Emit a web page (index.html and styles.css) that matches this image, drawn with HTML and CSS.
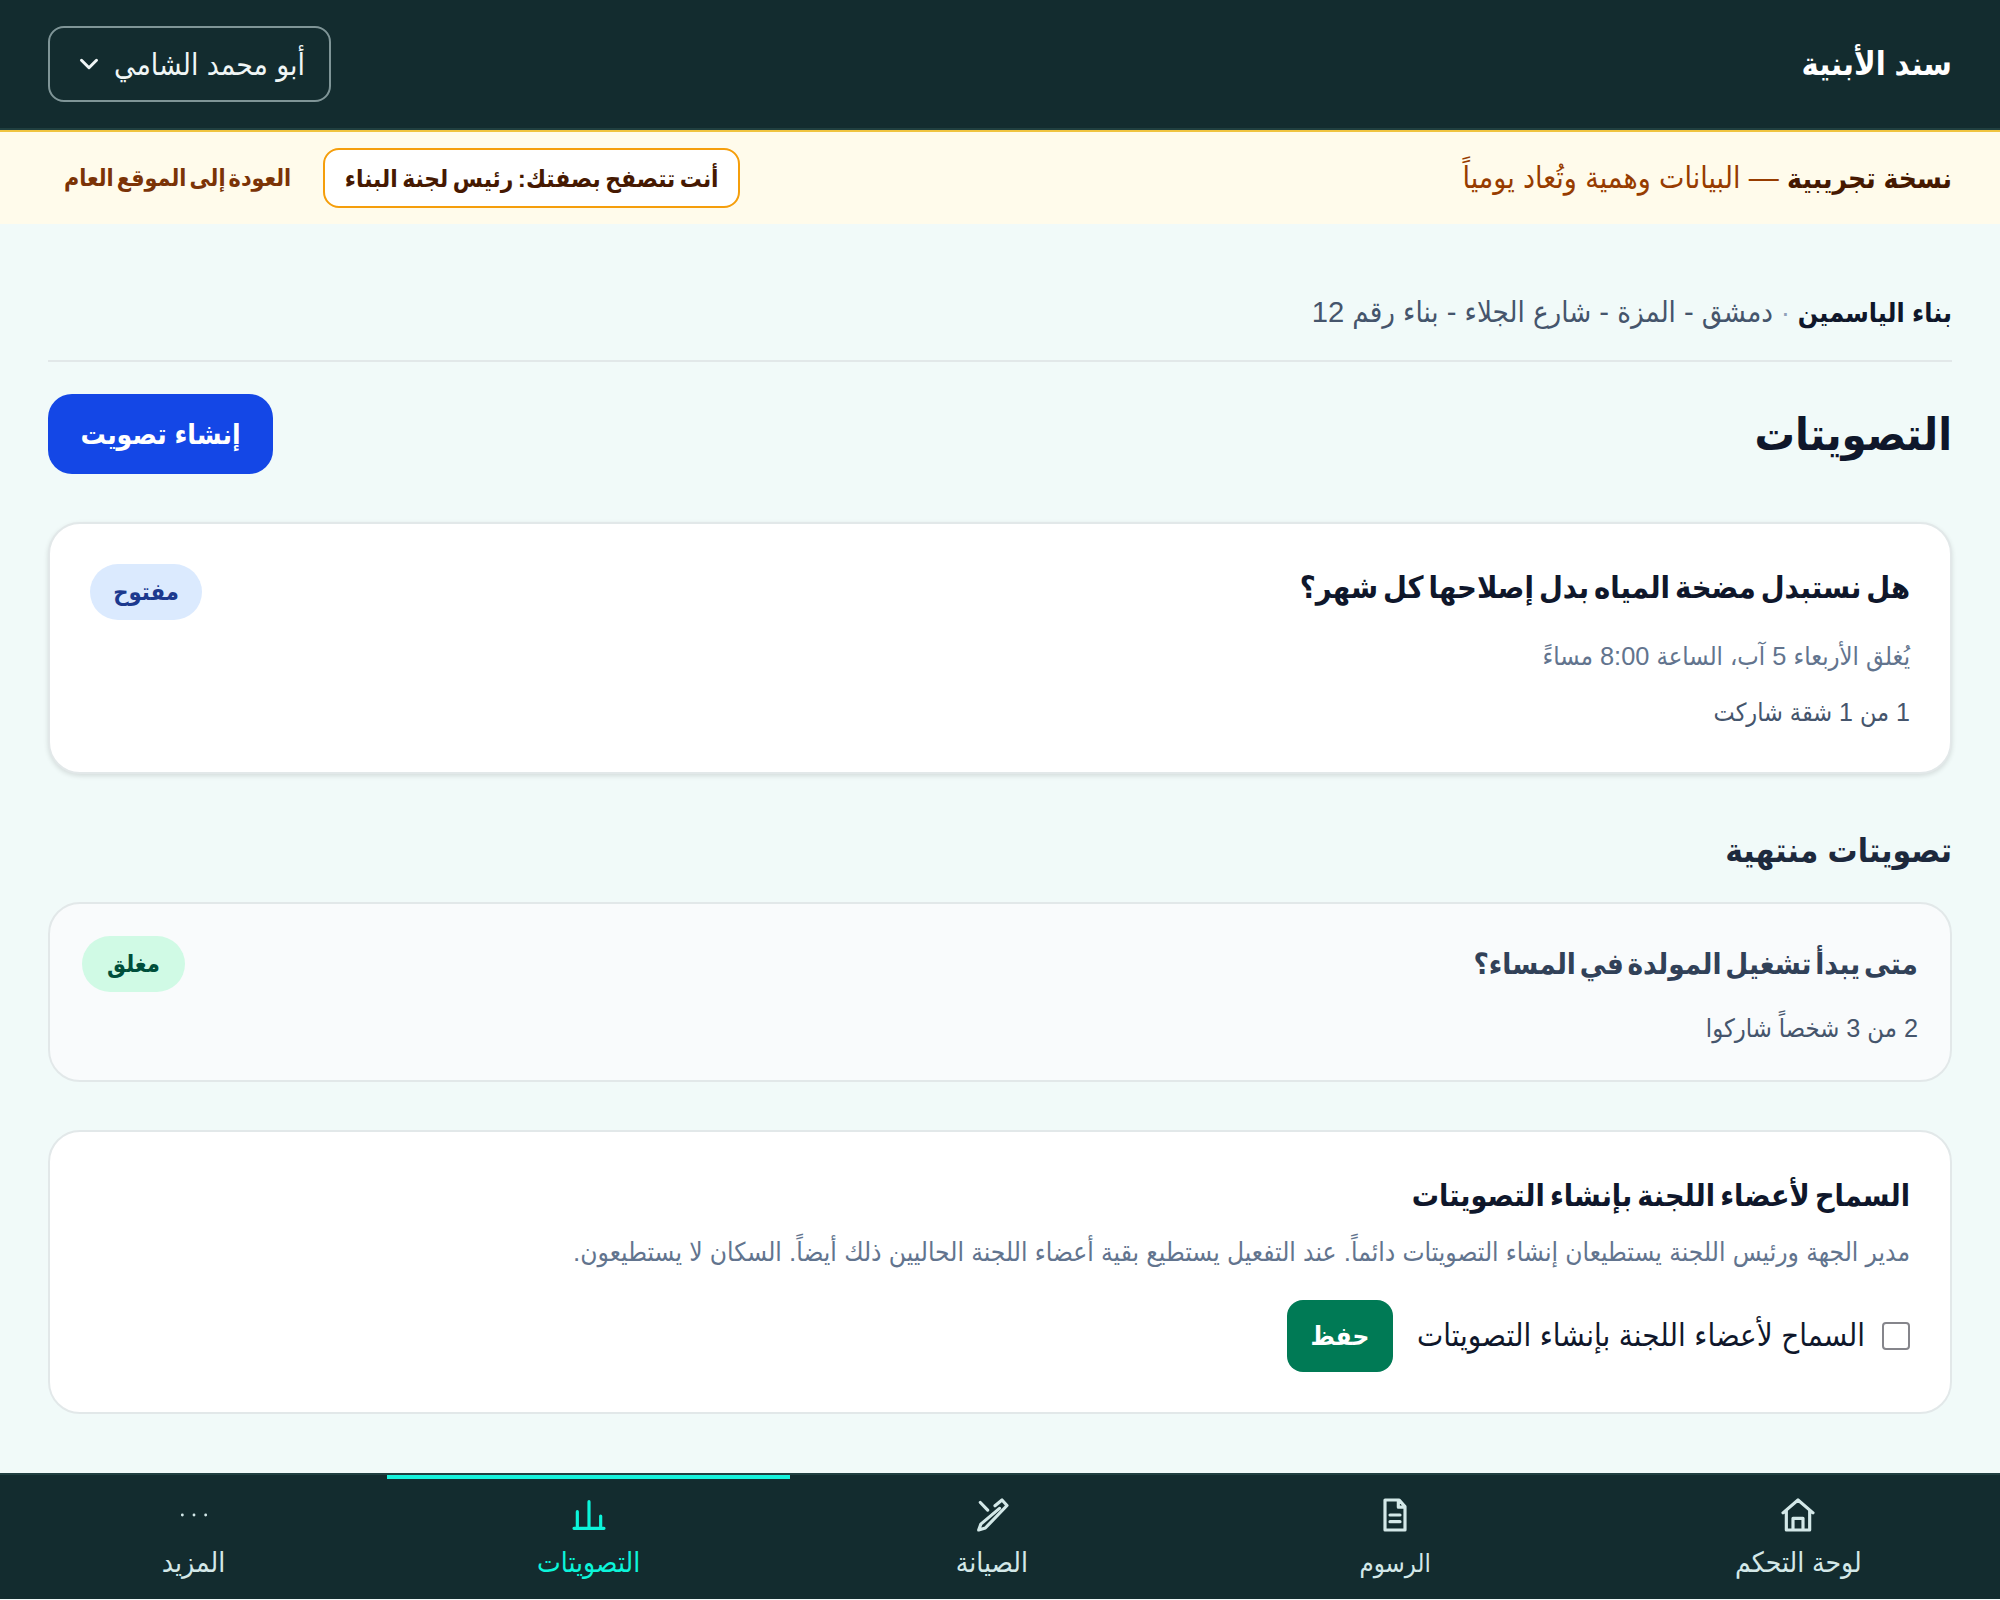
FILE: index.html
```html
<!DOCTYPE html>
<html lang="ar" dir="rtl">
<head>
<meta charset="utf-8">
<title>سند الأبنية</title>
<link rel="stylesheet" href="styles.css">
</head>
<body>
<header class="topbar">
  <span class="brand">سند الأبنية</span>
  <button class="user-menu"><span class="user-name">أبو محمد الشامي</span>
    <svg class="chevron" viewBox="0 0 24 24"><path d="m6 9 6 6 6-6"/></svg>
  </button>
</header>
<div class="demo-banner">
  <p class="demo-text"><strong>نسخة تجريبية</strong> <span>— البيانات وهمية وتُعاد يومياً</span></p>
  <div class="demo-actions">
    <span class="demo-role">أنت تتصفح بصفتك: رئيس لجنة البناء</span>
    <a class="demo-back">العودة إلى الموقع العام</a>
  </div>
</div>
<main class="content">
  <p class="building"><strong>بناء الياسمين</strong> <span class="dot">·</span> <span class="address">دمشق - المزة - شارع الجلاء - بناء رقم 12</span></p>
  <div class="page-head">
    <h1 class="page-title">التصويتات</h1>
    <button class="create">إنشاء تصويت</button>
  </div>
  <article class="card card-open">
    <div class="card-body">
      <h2 class="card-title">هل نستبدل مضخة المياه بدل إصلاحها كل شهر؟</h2>
      <p class="closes">يُغلق الأربعاء 5 آب، الساعة 8:00 مساءً</p>
      <p class="turnout">1 من 1 شقة شاركت</p>
    </div>
    <span class="badge badge-open">مفتوح</span>
  </article>
  <h2 class="section-title">تصويتات منتهية</h2>
  <article class="card card-closed">
    <div class="card-body">
      <h3 class="card-title">متى يبدأ تشغيل المولدة في المساء؟</h3>
      <p class="turnout">2 من 3 شخصاً شاركوا</p>
    </div>
    <span class="badge badge-closed">مغلق</span>
  </article>
  <section class="card settings">
    <h2 class="card-title">السماح لأعضاء اللجنة بإنشاء التصويتات</h2>
    <p class="hint">مدير الجهة ورئيس اللجنة يستطيعان إنشاء التصويتات دائماً. عند التفعيل يستطيع بقية أعضاء اللجنة الحاليين ذلك أيضاً. السكان لا يستطيعون.</p>
    <div class="setting-row">
      <label class="allow"><input class="check" type="checkbox"><span>السماح لأعضاء اللجنة بإنشاء التصويتات</span></label>
      <button class="save">حفظ</button>
    </div>
  </section>
</main>
<nav class="tabs">
  <a class="tab"><svg class="icon" viewBox="0 0 24 24"><path d="m3 10.7 9-7.7 9 7.7M5 9.5V21h14V9.5M9 21v-7h6v7"/></svg><span>لوحة التحكم</span></a>
  <a class="tab tab-fees"><svg class="icon" viewBox="0 0 24 24"><path d="M6 3h8.5L18 7v14H6zM14 3v4.3h4M9 12h6M9 16h6"/></svg><span>الرسوم</span></a>
  <a class="tab"><svg class="icon" viewBox="0 0 24 24"><path d="m5 4.5 4.4 4.6M13.8 6.5 18 3l3 3.3L8 19.8 4 21l1.3-3.5L16.5 8"/></svg><span>الصيانة</span></a>
  <a class="tab tab-active"><svg class="icon" viewBox="0 0 24 24"><path d="M3 20h18M5 20V10M12 20V4M19 20v-7.4"/></svg><span>التصويتات</span></a>
  <a class="tab tab-more"><svg class="icon" viewBox="0 0 24 24"><path d="M5 12h.01M12 12h.01M19 12h.01"/></svg><span>المزيد</span></a>
</nav>
</body>
</html>
```
FILE: styles.css
```css
* { box-sizing: border-box; }
body {
  margin: 0;
  min-height: 1600px;
  display: flex;
  flex-direction: column;
  background: #f1faf9;
  color: #0f172b;
  font-family: "Liberation Sans", "DejaVu Sans Condensed", "DejaVu Sans", sans-serif;
  font-size: 28px;
}
p, h1, h2, h3 { margin: 0; }
button { font: inherit; border: 0; margin: 0; padding: 0; }
svg { fill: none; stroke: currentColor; stroke-linecap: round; stroke-linejoin: round; }

.topbar {
  height: 130px;
  padding: 0 48px;
  display: flex;
  align-items: center;
  justify-content: space-between;
  background: #132c2f;
  border-bottom: 2px solid #203f40;
  color: #fff;
}
.brand { font-size: 32.4px; font-weight: 700; }
.user-menu {
  width: 283px;
  height: 76px;
  padding: 0 24px;
  display: flex;
  align-items: center;
  justify-content: space-between;
  background: transparent;
  border: 2px solid #7f9597;
  border-radius: 16px;
  color: #f0f6f6;
  font-size: 29.8px;
}
.chevron { width: 30px; height: 30px; stroke-width: 2.4; }

.demo-banner {
  height: 94px;
  padding: 0 48px;
  display: flex;
  align-items: center;
  justify-content: space-between;
  background: #fffbeb;
  border-top: 2px solid #f0c440;
}
.demo-text { line-height: 40px; font-size: 30px; color: #973c00; }
.demo-text strong { font-size: 28px; color: #461901; }
.demo-actions { display: flex; align-items: center; gap: 32px; font-weight: 700; }
.demo-role {
  width: 417px;
  height: 60px;
  display: flex;
  align-items: center;
  justify-content: center;
  background: #fff;
  border: 2px solid #f59e0b;
  border-radius: 16px;
  color: #461901;
  font-size: 24.3px;
  word-spacing: -2.3px;
}
.demo-back { padding-left: 16px; color: #7b3306; font-size: 23.1px; word-spacing: -3.3px; }

.content { padding: 68px 48px 59px; }
.building {
  height: 70px;
  border-bottom: 2px solid #e2e8e9;
  line-height: 40px;
  color: #45556c;
}
.building strong { font-size: 26.6px; color: #0f172b; }
.address { font-size: 29.2px; }
.dot { color: #90a1b9; }
.page-head { margin-top: 32px; display: flex; align-items: center; justify-content: space-between; }
.page-title { font-size: 44.8px; line-height: 80px; }
.create {
  width: 225px;
  height: 80px;
  border-radius: 24px;
  background: #1447e6;
  color: #fff;
  font-weight: 700;
}

.card { border: 2px solid #e2e8e9; border-radius: 32px; background: #fff; }
.card-open, .card-closed { display: flex; align-items: flex-start; justify-content: space-between; }
.card-open { margin-top: 48px; padding: 40px; box-shadow: 0 2px 5px rgba(0, 0, 0, 0.12); }
.card-title { font-size: 30.6px; line-height: 46px; word-spacing: -3.5px; }
.closes { margin-top: 26px; font-size: 25.4px; line-height: 40px; color: #62748e; }
.turnout { margin-top: 16px; font-size: 25px; line-height: 40px; color: #45556c; }
.badge {
  height: 56px;
  display: flex;
  align-items: center;
  justify-content: center;
  border-radius: 28px;
  font-size: 23.6px;
  font-weight: 700;
}
.badge-open { width: 112px; background: #dbeafe; color: #1c398e; }
.badge-closed { width: 103px; background: #d0fae5; color: #004f3b; }

.section-title { margin-top: 53px; font-size: 33.3px; line-height: 48px; color: #1d293d; }
.card-closed { margin-top: 27px; padding: 32px; background: #f9fbfc; }
.card-closed .card-title { font-size: 29.4px; line-height: 56px; word-spacing: -4.4px; color: #314158; }
.card-closed .turnout { font-size: 25.3px; }

.settings { margin-top: 48px; padding: 40px; }
.settings .card-title { font-size: 30.2px; line-height: 48px; word-spacing: -3.3px; }
.hint { margin-top: 12px; font-size: 26.1px; line-height: 40px; color: #62748e; white-space: nowrap; }
.setting-row { margin-top: 28px; display: flex; align-items: center; gap: 24px; }
.allow { display: flex; align-items: center; gap: 17px; font-size: 31px; line-height: 40px; }
.check {
  appearance: none;
  width: 28px;
  height: 28px;
  margin: 0;
  border: 2px solid #85858b;
  border-radius: 4px;
  background: #fff;
}
.save {
  width: 106px;
  height: 72px;
  border-radius: 16px;
  background: #007a55;
  color: #fff;
  font-size: 26px;
  font-weight: 700;
}

.tabs {
  height: 126px;
  display: grid;
  grid-template-columns: repeat(4, 403.25px) 387px;
  background: #132c2f;
  border-top: 2px solid #203f40;
  color: #d3e8e8;
  font-size: 28px;
}
.tab {
  padding-top: 16px;
  display: flex;
  flex-direction: column;
  align-items: center;
  gap: 11px;
  line-height: 34px;
  border-top: 4px solid transparent;
}
.tab-fees { font-size: 25.5px; }
.tab-active { border-top-color: #17f2dc; color: #0cf5da; }
.icon { width: 40px; height: 40px; stroke-width: 1.9; }
.tab-more .icon { stroke-width: 1.7; }
```
